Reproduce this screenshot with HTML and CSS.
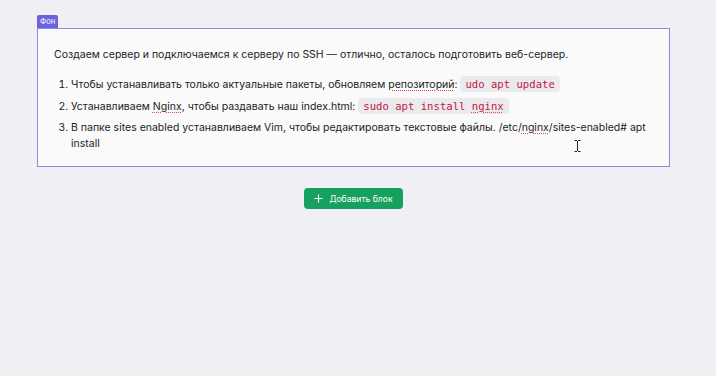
FILE: index.html
```html
<!DOCTYPE html>
<html lang="ru">
<head>
    <meta charset="UTF-8">
    <meta name="viewport" content="width=device-width, initial-scale=1.0">
    <title>Редактор блоков</title>
    <link rel="stylesheet" href="styles.css">
</head>
<body>
    <div class="editor">
        <div class="block">
            <span class="block-label">Фон</span>
            <div class="block-body">
                <p>Создаем сервер и подключаемся к серверу по SSH — отлично, осталось подготовить веб-сервер.</p>
                <ol>
                    <li>Чтобы устанавливать только актуальные пакеты, обновляем <span class="typo">репозиторий</span>: <code>udo apt update</code></li>
                    <li>Устанавливаем <span class="typo">Nginx</span>, чтобы раздавать наш index.html: <code>sudo apt install <span class="typo">nginx</span></code></li>
                    <li>В папке sites enabled устанавливаем Vim, чтобы редактировать текстовые файлы. /etc/<span class="typo">nginx</span>/sites-enabled# apt install</li>
                </ol>
                <svg class="cursor" width="7" height="12" viewBox="0 0 7 12">
                    <path d="M0.5 0.5h2.5M4 0.5h2.5M3.5 1v10M0.5 11.5h2.5M4 11.5h2.5" stroke="#222" stroke-width="1" fill="none"/>
                </svg>
            </div>
        </div>

        <div class="actions">
            <button class="btn add">
                <svg width="9" height="9" viewBox="0 0 9 9">
                    <path d="M4.5 0.5v8M0.5 4.5h8" stroke="#fff" stroke-width="1.1"/>
                </svg>
                Добавить блок
            </button>
        </div>
    </div>
</body>
</html>
```

FILE: styles.css
```css
* {
    margin: 0;
    padding: 0;
    box-sizing: border-box;
}

body {
    font-family: Inter, 'Noto Sans', sans-serif;
    background: #f0f0f4;
    min-height: 100vh;
    color: #1c1c22;
}

.editor {
    padding: 15px 46px 0 37px;
}

.block {
    display: flex;
    flex-direction: column;
    align-items: flex-start;
}

.block-label {
    background: #6b62dc;
    color: #fff;
    font-size: 7.5px;
    line-height: 13px;
    padding: 0 3px;
    border-radius: 2px 2px 0 0;
}

.block-body {
    position: relative;
    width: 100%;
    height: 139px;
    background: #fafafb;
    border: 1px solid #8f89e2;
    padding: 18px 16px 0 16px;
    font-size: 10.5px;
    line-height: 16px;
}

.block-body p {
    margin-bottom: 13px;
}

.block-body ol {
    padding-left: 17px;
}

.block-body li {
    margin-bottom: 5px;
}

.block-body li:last-child {
    margin-bottom: 0;
}

code {
    font-family: 'DejaVu Sans Mono', 'Liberation Mono', monospace;
    font-size: 10.6px;
    color: #c4163a;
    background: #ebebef;
    border-radius: 4px;
    padding: 2px 5px;
}

.typo {
    text-decoration: underline dotted #e0475f;
    text-underline-offset: 2px;
}

.cursor {
    position: absolute;
    left: 536px;
    top: 111px;
}

.actions {
    display: flex;
    justify-content: center;
    padding-top: 21px;
}

.btn {
    display: flex;
    align-items: center;
    gap: 6px;
    height: 21px;
    padding: 0 10px;
    border: none;
    border-radius: 4px;
    background: #17a15e;
    color: #fff;
    font-family: Inter, 'Noto Sans', sans-serif;
    font-size: 8.6px;
    cursor: pointer;
}
```
